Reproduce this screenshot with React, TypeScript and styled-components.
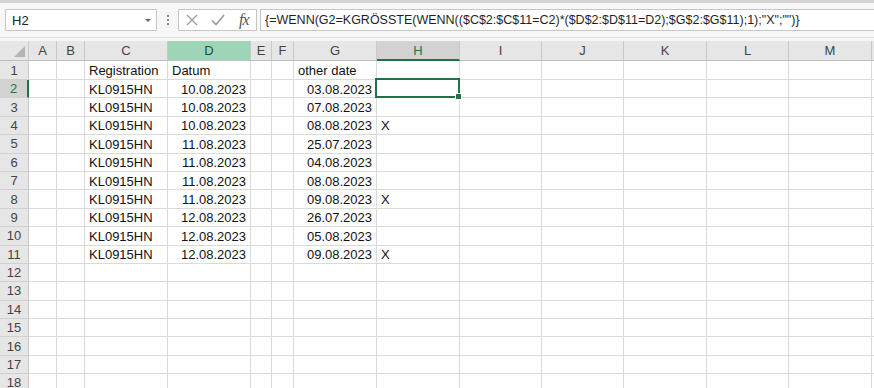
import React from "react";
import styled, { createGlobalStyle, css } from "styled-components";

const Global = createGlobalStyle`
  html, body { margin: 0; padding: 0; background: #ffffff; overflow: hidden; }
  body { font-family: "Liberation Sans", Arial, sans-serif; }
`;

const Page = styled.div`
  width: 874px;
  height: 388px;
  overflow: hidden;
  display: flex;
  flex-direction: column;
  background: #ffffff;
`;

const TopBand = styled.div`
  height: 3px;
  background: #d4d4d4;
  flex: none;
`;

const FormulaBar = styled.div`
  height: 35px;
  flex: none;
  display: flex;
  align-items: center;
  padding-left: 5px;
  background: #f7f7f7;
  border-bottom: 1px solid #dcdcdc;
  box-sizing: border-box;
`;

const NameBox = styled.div`
  width: 152px;
  height: 22px;
  box-sizing: border-box;
  background: #fff;
  border: 1px solid #c6c6c6;
  display: flex;
  align-items: center;
  justify-content: space-between;
  padding: 0 5px 0 6px;
  font-size: 13px;
  color: #222;
`;

const Caret = styled.span`
  width: 0;
  height: 0;
  border-left: 3px solid transparent;
  border-right: 3px solid transparent;
  border-top: 3px solid #666;
  margin-top: 1px;
`;

const Grip = styled.div`
  width: 21px;
  display: flex;
  flex-direction: column;
  align-items: center;
  gap: 2px;
  span {
    width: 2px;
    height: 2px;
    background: #8a8a8a;
  }
`;

const FxBox = styled.div`
  width: 79px;
  height: 22px;
  box-sizing: border-box;
  background: #fff;
  border: 1px solid #c6c6c6;
  display: flex;
  align-items: center;
  padding: 0 0 0 7px;
  gap: 13px;
`;

const Fx = styled.span`
  font-family: "Liberation Serif", "DejaVu Serif", serif;
  font-style: italic;
  font-size: 16px;
  color: #555;
  letter-spacing: -1px;
  margin-left: 1px;
`;

const FormulaInput = styled.div`
  flex: 1;
  margin-left: 3px;
  height: 22px;
  box-sizing: border-box;
  background: #fff;
  border: 1px solid #c6c6c6;
  border-right: none;
  display: flex;
  align-items: center;
  padding-left: 4px;
  font-size: 12.5px;
  color: #1f1f1f;
  white-space: nowrap;
`;

const Gap = styled.div`
  height: 3px;
  flex: none;
  background: #f7f7f7;
`;

const Sheet = styled.div`
  display: grid;
  grid-template-columns: 29px 28px 28px 83px 83px 21px 22px 83px 83px 82px 82px 83px 82px 83px 100px;
  grid-template-rows: 20px 19px repeat(17, 18.4px);
  font-size: 13px;
  color: #111;
`;

type HeadState = "none" | "ref" | "active";

const ColHead = styled.div<{ $state: HeadState }>`
  box-sizing: border-box;
  background: #e6e6e6;
  border-right: 1px solid #c9c9c9;
  border-bottom: 1px solid #bdbdbd;
  display: flex;
  align-items: center;
  justify-content: center;
  color: #444;
  font-size: 13px;
  ${(p) =>
    p.$state === "ref" &&
    css`
      background: #9fd5b7;
      color: #2b4a38;
    `}
  ${(p) =>
    p.$state === "active" &&
    css`
      background: #d2d2d2;
      color: #217346;
      border-bottom: 2px solid #217346;
    `}
`;

const Corner = styled.div`
  box-sizing: border-box;
  background: #e6e6e6;
  border-right: 1px solid #c9c9c9;
  border-bottom: 1px solid #bdbdbd;
  display: flex;
  align-items: flex-end;
  justify-content: flex-end;
  padding: 0 3px 3px 0;
`;

const RowHead = styled.div<{ $active?: boolean }>`
  box-sizing: border-box;
  background: #e6e6e6;
  border-right: 1px solid #c9c9c9;
  border-bottom: 1px solid #d0d0d0;
  display: flex;
  align-items: center;
  justify-content: center;
  color: #444;
  font-size: 13px;
  ${(p) =>
    p.$active &&
    css`
      background: #d2d2d2;
      color: #217346;
      border-right: 2px solid #217346;
    `}
`;

const Cell = styled.div<{ $align?: "left" | "right"; $selected?: boolean }>`
  box-sizing: border-box;
  border-right: 1px solid #dadada;
  border-bottom: 1px solid #dadada;
  display: flex;
  align-items: center;
  justify-content: ${(p) => (p.$align === "right" ? "flex-end" : "flex-start")};
  padding: 1px 4px 0 4px;
  white-space: nowrap;
  overflow: visible;
  position: relative;
  ${(p) =>
    p.$selected &&
    css`
      z-index: 2;
      &::after {
        content: "";
        position: absolute;
        left: -2px;
        top: -2px;
        right: -1px;
        bottom: -1px;
        border: 2px solid #217346;
      }
      &::before {
        content: "";
        position: absolute;
        right: -3px;
        bottom: -3px;
        width: 5px;
        height: 5px;
        background: #217346;
        border: 1px solid #fff;
        z-index: 3;
      }
    `}
`;

const columns = ["A", "B", "C", "D", "E", "F", "G", "H", "I", "J", "K", "L", "M", "N"];

const dDates = [
  "10.08.2023", "10.08.2023", "10.08.2023", "11.08.2023", "11.08.2023",
  "11.08.2023", "11.08.2023", "12.08.2023", "12.08.2023", "12.08.2023",
];
const gDates = [
  "03.08.2023", "07.08.2023", "08.08.2023", "25.07.2023", "04.08.2023",
  "08.08.2023", "09.08.2023", "26.07.2023", "05.08.2023", "09.08.2023",
];
const xRows = new Set([4, 8, 11]);

type CellData = { text: string; align?: "left" | "right" };

function cellFor(row: number, col: string): CellData | null {
  if (row === 1) {
    if (col === "C") return { text: "Registration" };
    if (col === "D") return { text: "Datum" };
    if (col === "G") return { text: "other date" };
    return null;
  }
  if (row >= 2 && row <= 11) {
    const i = row - 2;
    if (col === "C") return { text: "KL0915HN" };
    if (col === "D") return { text: dDates[i], align: "right" };
    if (col === "G") return { text: gDates[i], align: "right" };
    if (col === "H" && xRows.has(row)) return { text: "X" };
  }
  return null;
}

const formula = '{=WENN(G2=KGRÖSSTE(WENN(($C$2:$C$11=C2)*($D$2:$D$11=D2);$G$2:$G$11);1);"X";"")}';

export default function App() {
  const rows = Array.from({ length: 18 }, (_, i) => i + 1);
  return (
    <Page>
      <Global />
      <TopBand />
      <FormulaBar>
        <NameBox>
          <span>H2</span>
          <Caret />
        </NameBox>
        <Grip>
          <span />
          <span />
          <span />
        </Grip>
        <FxBox>
          <svg width="12" height="12" viewBox="0 0 12 12">
            <path d="M1 1 L11 11 M11 1 L1 11" stroke="#9a9a9a" strokeWidth="1.3" fill="none" />
          </svg>
          <svg width="14" height="12" viewBox="0 0 14 12">
            <path d="M1 6.5 L5 10.5 L13 1" stroke="#9a9a9a" strokeWidth="1.6" fill="none" />
          </svg>
          <Fx>fx</Fx>
        </FxBox>
        <FormulaInput>{formula}</FormulaInput>
      </FormulaBar>
      <Gap />
      <Sheet>
        <Corner>
          <svg width="11" height="11" viewBox="0 0 11 11">
            <path d="M11 0 L11 11 L0 11 Z" fill="#b4b4b4" />
          </svg>
        </Corner>
        {columns.map((c) => (
          <ColHead key={c} $state={c === "D" ? "ref" : c === "H" ? "active" : "none"}>
            {c === "N" ? "" : c}
          </ColHead>
        ))}
        {rows.map((r) => (
          <React.Fragment key={r}>
            <RowHead $active={r === 2}>{r}</RowHead>
            {columns.map((c) => {
              const d = cellFor(r, c);
              return (
                <Cell key={c} $align={d?.align} $selected={r === 2 && c === "H"}>
                  {d?.text}
                </Cell>
              );
            })}
          </React.Fragment>
        ))}
      </Sheet>
    </Page>
  );
}
